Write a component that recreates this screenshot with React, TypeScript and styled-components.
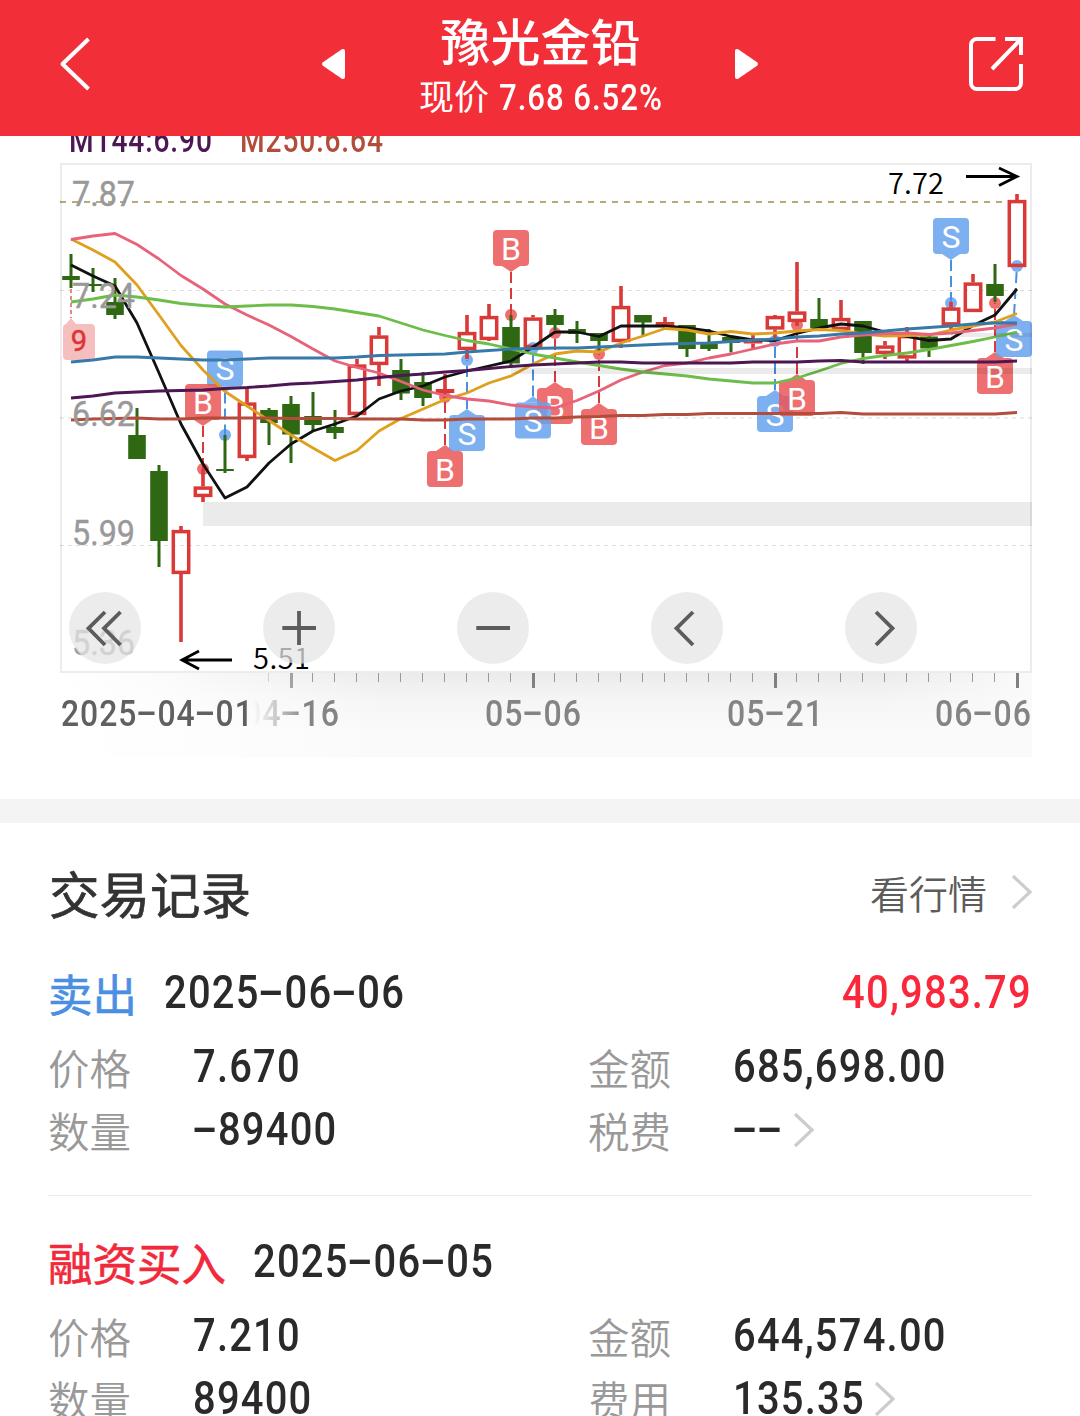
import React from "react";
import styled, { createGlobalStyle } from "styled-components";

const CJK = `"Noto Sans CJK SC", sans-serif`;
const DIGITS = `Roboto, "Noto Sans CJK SC", sans-serif`;
const RED = "#d93a38";
const GREEN = "#2f6813";

const GlobalStyle = createGlobalStyle`
  * { box-sizing: border-box; }
  body { margin: 0; background: #fff; }
`;

const Page = styled.div`
  width: 1080px;
  height: 1416px;
  overflow: hidden;
  background: #fff;
  font-family: ${CJK};
`;

/* ---------- condensed numerals ---------- */

const NumBox = styled.span<{ $size: number; $width: number; $weight: number; $color: string; $right?: boolean }>`
  display: inline-flex;
  flex: none;
  justify-content: ${(p) => (p.$right ? "flex-end" : "flex-start")};
  width: ${(p) => p.$width}px;
  font-family: ${DIGITS};
  font-size: ${(p) => p.$size}px;
  line-height: 1.2;
  font-weight: ${(p) => p.$weight};
  color: ${(p) => p.$color};
  white-space: pre;
`;

const NumText = styled.span<{ $right?: boolean; $squeeze: number }>`
  flex: none;
  transform: scaleX(${(p) => p.$squeeze});
  transform-origin: ${(p) => (p.$right ? "right" : "left")} center;
  letter-spacing: 0.031em;
`;

const Dash = styled.span`
  display: inline-block;
  width: 0.625em;
  letter-spacing: 0;
  text-align: center;
  transform: translate(-0.02em, -0.03em) scaleX(1.95);
`;

type NumProps = {
  text: string;
  size: number;
  width: number;
  weight?: number;
  color: string;
  right?: boolean;
  squeeze?: number;
};

function Num({ text, size, width, weight = 500, color, right, squeeze = 0.867 }: NumProps) {
  return (
    <NumBox $size={size} $width={width} $weight={weight} $color={color} $right={right}>
      <NumText $right={right} $squeeze={squeeze}>
        {text.split(/(-)/).map((part, i) => (part === "-" ? <Dash key={i}>-</Dash> : part))}
      </NumText>
    </NumBox>
  );
}

/* ---------- header ---------- */

const Header = styled.header`
  display: grid;
  grid-template-columns: 100px 440px 100px;
  align-items: center;
  justify-content: space-between;
  height: 136px;
  padding: 0 58px 8px 57px;
  background: #f22f38;
  color: #fff;
`;

const Stepper = styled.div`
  display: flex;
  align-items: center;
  justify-content: space-between;
`;

const Heading = styled.div`
  display: flex;
  flex-direction: column;
  align-items: center;
  padding-left: 2px;
`;

const StockName = styled.h1`
  margin: 0;
  font-size: 50px;
  line-height: 60px;
  font-weight: 500;
`;

const Quote = styled.div`
  display: flex;
  align-items: center;
  gap: 10px;
  height: 50px;
  padding-top: 10px;
`;

const QuoteLabel = styled.span`
  font-size: 35px;
  line-height: 40px;
  padding-bottom: 8px;
`;

const ShareSlot = styled.div`
  display: flex;
  justify-content: flex-end;
  margin-right: -1px;
`;

/* ---------- chart ---------- */

const Legend = styled.div`
  display: flex;
  align-items: flex-end;
  gap: 25px;
  height: 27px;
  padding: 0 0 1px 69px;
  overflow: hidden;
`;

const ChartPanel = styled.section`
  position: relative;
  width: 972px;
  margin: 0 48px 42px 60px;
`;

const Plot = styled.svg`
  display: block;
  width: 972px;
  height: 510px;
  overflow: visible;
`;

const Controls = styled.div`
  position: absolute;
  left: 9px;
  top: 429px;
  display: flex;
  gap: 122px;
`;

const RoundButton = styled.button`
  width: 72px;
  height: 72px;
  padding: 0;
  border: 0;
  border-radius: 50%;
  background: rgba(230, 230, 230, 0.74);
`;

const Axis = styled.div`
  height: 84px;
  background:
    linear-gradient(90deg, #fff 0, rgba(255, 255, 255, 0.8) 100px, rgba(255, 255, 255, 0) 330px),
    linear-gradient(270deg, #fafafa 0, rgba(250, 250, 250, 0) 150px),
    linear-gradient(180deg, #ebebeb 0, #f5f5f5 26px, #fafafa 58px);
`;

const Ticks = styled.svg`
  display: block;
  width: 972px;
  height: 16px;
`;

const DateRow = styled.div`
  display: flex;
  align-items: center;
  height: 52px;
`;

const DateSlot = styled.span<{ $gap: number; $fade?: boolean }>`
  flex: none;
  display: flex;
  margin-left: ${(p) => p.$gap}px;
  ${(p) => p.$fade && "mask-image: linear-gradient(90deg, transparent 10px, rgba(0,0,0,.3) 28px, #000 62px);"}
`;

/* ---------- records ---------- */

const Strip = styled.div`
  height: 24px;
  background: #f4f4f4;
`;

const SectionHead = styled.div`
  display: flex;
  align-items: center;
  justify-content: space-between;
  height: 104px;
  padding: 34px 47px 0 49px;
`;

const SectionTitle = styled.h2`
  margin: 0;
  font-size: 50.5px;
  line-height: 60px;
  font-weight: 400;
  -webkit-text-stroke: 0.7px #333;
  color: #333;
`;

const QuoteLink = styled.a`
  display: flex;
  align-items: center;
  gap: 24px;
  font-size: 39px;
  line-height: 50px;
  font-weight: 350;
  color: #5c5c5c;
`;

const Record = styled.article`
  height: 269px;
  margin: 0 48px;
  padding-top: 36px;
  border-bottom: 1px solid #e9e9e9;
`;

const RecordHead = styled.div`
  display: flex;
  align-items: center;
  height: 60px;
  margin-bottom: 12px;
`;

const Side = styled.span<{ $color: string }>`
  margin-right: 26.5px;
  font-size: 44.5px;
  line-height: 60px;
  font-weight: 400;
  color: ${(p) => p.$color};
  -webkit-text-stroke: 0.6px ${(p) => p.$color};
`;

const Profit = styled.span`
  display: flex;
  margin-left: auto;
`;

const Fields = styled.dl`
  display: grid;
  grid-template-columns: 145px 395px 145px 1fr;
  grid-auto-rows: 63px;
  align-items: center;
  margin: 0;
`;

const Label = styled.dt`
  font-size: 41.5px;
  line-height: 60px;
  font-weight: 350;
  color: #999;
  padding-top: 1px;
`;

const Value = styled.dd`
  display: flex;
  align-items: center;
  margin: 0;
`;

/* ---------- chart data ---------- */

const x = (i: number) => 71 + 22 * i;

// [high, bodyTop, bodyBottom, low, rising]
const candles: [number, number, number, number, 0 | 1][] = [
  [254, 276, 280, 288, 0], [268, 284, 286, 292, 0], [278, 302, 315, 319, 0], [408, 435, 459, 459, 0],
  [465, 471, 541, 567, 0], [526, 530, 574, 642, 1], [469, 486.5, 497, 502, 1], [435, 469, 471, 473, 0],
  [387, 402.5, 458, 461, 1], [408, 410, 423, 445, 0], [396, 404, 434.5, 463, 0], [392, 416, 425, 431, 0],
  [410, 427, 433, 439, 0], [359, 364.5, 415, 415, 1], [327, 335.5, 365, 386, 1], [359, 370, 393.5, 400, 0],
  [372, 382, 398, 406, 0], [374, 389, 393, 400, 1], [315, 332, 350, 359, 1], [304, 316, 340, 341, 1],
  [315, 327, 363.5, 366, 0], [315, 317.5, 348, 348, 1], [309, 315, 325, 330, 0], [321, 329, 334, 343, 0],
  [333, 333, 341, 352, 0], [286, 306, 342, 348, 1], [315, 315, 322.5, 335, 0], [317, 322, 326, 328, 1],
  [325, 325, 349, 357, 0], [329, 344, 349, 351, 0], [337, 337, 343, 352.5, 0], [335, 341.5, 343.5, 348, 1],
  [315, 316, 329.5, 338, 1], [262, 311.5, 322, 326, 1], [298, 319, 328, 328, 0], [300, 318, 330, 330, 1],
  [321, 321, 353, 364, 0], [341, 345.5, 354, 359, 1], [327, 335, 358.5, 361, 1], [336, 336.5, 348.5, 357, 0],
  [302, 307.5, 325.5, 331, 1], [274, 282.5, 312, 312, 1], [264, 284, 296, 302, 0], [194, 200, 267, 267, 1],
];

const averages: { color: string; ys: number[] }[] = [
  { color: "#111", ys: [265, 276, 286, 323, 373, 424, 464, 498, 487, 463, 444, 431, 424, 416, 399, 391, 386, 377, 371, 366, 361, 347, 332, 332, 336.5, 326, 326, 326, 328, 331, 336.5, 340, 340.5, 333.5, 328, 324, 326, 332, 336.5, 340.5, 339, 325.5, 315, 289] },
  { color: "#dfa01e", ys: [239, 250, 262, 285, 315, 345.5, 370, 391.5, 406, 420.5, 435, 448, 460.5, 450.5, 431, 418.5, 409, 399.5, 393, 383, 376, 364, 354, 351, 352, 343, 336, 328.5, 330, 334, 331.5, 334, 333, 331, 329.5, 330.5, 334, 336, 335.5, 335, 330, 326, 322, 313.5] },
  { color: "#e8637a", ys: [239.5, 236, 233.5, 244.5, 259, 275.5, 289, 304, 315, 325, 336.5, 349, 361, 367.5, 373, 381.5, 390, 395.5, 399, 401, 405, 407, 408, 400.5, 391, 380, 372, 365.5, 363, 358, 354, 349, 344, 341, 341, 337, 335, 333.5, 333, 334.5, 333, 330.5, 328, 324] },
  { color: "#6cbd49", ys: [302, 299, 295, 297, 300, 303.5, 305.5, 307, 306, 305, 305, 306.5, 309, 312.5, 316, 323, 330, 335.5, 340.5, 344, 349, 354, 358, 362, 365.5, 369, 372, 374, 376, 379, 381, 383, 383, 378, 371, 363.5, 358.5, 355.5, 353, 349.5, 345.5, 341.5, 337, 332] },
  { color: "#3779a8", ys: [362, 360, 357, 357, 358, 359, 360, 360, 359, 358, 358, 358, 358, 357, 355.5, 355, 354.5, 354, 352, 350.5, 349, 348.5, 348, 348, 347, 346, 345, 344, 343.5, 343, 341.5, 340, 339, 337, 336, 334, 333, 331, 329, 327.5, 326, 324, 323, 323] },
  { color: "#4c1753", ys: [398, 396, 393, 392, 391, 390.5, 390, 388.5, 387.5, 386, 384, 383, 381.5, 380, 377.5, 375.5, 374, 372, 370.5, 368.5, 366.5, 365, 364, 363, 362, 362, 363, 363, 363, 363, 363, 362, 362, 362, 361, 360.5, 362, 362, 362, 362, 362, 362, 362, 361] },
  { color: "#b24d3b", ys: [420, 419, 418.5, 418, 419, 419, 418, 418, 418, 418, 418.5, 418.5, 418.5, 419, 419, 419, 420, 420, 419, 419, 419, 418, 418, 417, 416.5, 415.5, 415.5, 414.5, 414.5, 413.5, 413.5, 413.5, 413.5, 413.5, 413.5, 412.5, 414, 414, 414, 414, 414, 414, 414, 412.5] },
];

type Trade = { i: number; side: "B" | "S"; top: number; dot: number; shift?: number };
const trades: Trade[] = [
  { i: 7, side: "S", top: 350.5, dot: 435 },
  { i: 6, side: "B", top: 384, dot: 469 },
  { i: 17, side: "B", top: 451, dot: 397 },
  { i: 18, side: "S", top: 415, dot: 360 },
  { i: 20, side: "B", top: 230, dot: 315 },
  { i: 22, side: "B", top: 388, dot: 333 },
  { i: 21, side: "S", top: 402.5, dot: 348 },
  { i: 24, side: "B", top: 409, dot: 354 },
  { i: 32, side: "S", top: 396, dot: 341 },
  { i: 33, side: "B", top: 380, dot: 325 },
  { i: 40, side: "S", top: 218, dot: 303 },
  { i: 42, side: "B", top: 358, dot: 303 },
  { i: 43, side: "S", top: 321, dot: 266, shift: -3 },
];

const priceMarks: [string, number][] = [["7.87", 206], ["7.24", 308], ["6.62", 425.5], ["5.99", 545], ["5.36", 655]];

function TradeMark({ i, side, top, dot, shift = 0 }: Trade) {
  const cx = x(i);
  const bx = cx + shift;
  const above = top < dot;
  const edge = above ? top + 36 : top;
  const tip = above ? edge + 6 : edge - 6;
  const fill = side === "B" ? "#eb5656" : "#66a2ed";
  const line = side === "B" ? "#d8393a" : "#4a8fe0";
  return (
    <g>
      <circle cx={cx} cy={dot} r="6" fill={fill} fillOpacity="0.85" />
      <line x1={bx} y1={tip} x2={cx} y2={dot} stroke={line} strokeWidth="2" strokeDasharray="11 5" />
      <g fill={fill} fillOpacity="0.85">
        <rect x={bx - 18} y={top} width="36" height="36" rx="4" />
        <path d={`M${bx - 9} ${edge}L${bx} ${tip}L${bx + 9} ${edge}Z`} />
      </g>
      <text x={bx} y={top + 29.5} textAnchor="middle" fontFamily={DIGITS} fontSize="32" fill="#fff">{side}</text>
    </g>
  );
}

function Candle({ i }: { i: number }) {
  const [hi, top, bottom, lo, rising] = candles[i];
  const cx = x(i);
  if (!rising) {
    return (
      <g fill={GREEN}>
        <rect x={cx - 1.5} y={hi} width="3" height={lo - hi} />
        <rect x={cx - 8.8} y={top} width="17.6" height={bottom - top} />
      </g>
    );
  }
  const flat = bottom - top < 6;
  return (
    <g fill={RED}>
      <rect x={cx - 1.8} y={hi} width="3.6" height={Math.max(0, top - hi)} />
      <rect x={cx - 1.8} y={bottom} width="3.6" height={Math.max(0, lo - bottom)} />
      {flat ? (
        <rect x={cx - 9.3} y={top} width="18.6" height={bottom - top} />
      ) : (
        <rect x={cx - 7.7} y={top + 1.6} width="15.4" height={bottom - top - 3.2} fill="none" stroke={RED} strokeWidth="3.5" />
      )}
    </g>
  );
}

function KLine() {
  return (
    <Plot viewBox="60 163 972 510">
      <g stroke="#dcdcdc" strokeWidth="1.2" strokeDasharray="4 4">
        <path d="M60 290.5H1032M60 418H1032M60 545.5H1032" />
      </g>
      <path d="M60 202H1003" stroke="#b9a878" strokeWidth="2" strokeDasharray="6 6" />
      <path d="M71 289V318" stroke="#ea8585" strokeWidth="2" strokeDasharray="4 3" />
      <path d="M68 324H91a4 4 0 0 1 4 4V356a4 4 0 0 1-4 4H67a4 4 0 0 1-4-4V328a4 4 0 0 1 3-4L71 318L76 324Z" fill="#f6bfbf" />
      <text x="79" y="351" textAnchor="middle" fontFamily={DIGITS} fontSize="29" fill="#dd3535" stroke="#dd3535" strokeWidth="0.5">9</text>
      {trades.map((t) => <TradeMark key={t.i} {...t} />)}
      {candles.map((_, i) => <Candle key={i} i={i} />)}
      {averages.map((a) => (
        <polyline key={a.color} points={a.ys.map((y, i) => `${x(i)},${y}`).join(" ")} fill="none" stroke={a.color} strokeWidth="2.8" strokeLinejoin="round" />
      ))}
      <g fill="#000" fillOpacity="0.08">
        <rect x="203" y="502" width="829" height="24" />
        <rect x="511" y="368" width="521" height="6" />
        <rect x="951" y="333" width="81" height="4" />
      </g>
      <rect x="61" y="164" width="970" height="508" fill="none" stroke="#000" strokeOpacity="0.075" strokeWidth="2" />
      <g fill="#999" stroke="#999" strokeWidth="0.4" fontFamily={DIGITS} fontSize="35.5">
        {priceMarks.map(([label, y]) => (
          <text key={label} x="72" y={y} textLength="63" lengthAdjust="spacingAndGlyphs">{label}</text>
        ))}
      </g>
      <g fontFamily={CJK} fontSize="29" fontWeight="350" fill="#000">
        <text x="888" y="194" textLength="56">7.72</text>
        <text x="253" y="669" textLength="57">5.51</text>
      </g>
      <g fill="none" stroke="#000" strokeWidth="2.8">
        <path d="M966 176.500H1017M999 168L1017 176.500L999 185.500" />
        <path d="M232 660H182M199 651L182 660L199 669" />
      </g>
    </Plot>
  );
}

const controlPaths = [
  "M36 20L19.500 36.300L36 53M51.500 20L35 36.300L51.500 53",
  "M19.300 36H53M36 19V53",
  "M19.300 36H53",
  "M42 20L25.500 36.300L42 53",
  "M31 20L47.500 36.300L31 53",
];
const controlNames = ["最早", "放大", "缩小", "左移", "右移"];

function Chevron() {
  return (
    <svg width="22" height="38" viewBox="0 0 22 38" fill="none" stroke="#ccc" strokeWidth="3.2">
      <path d="M2 3L19 19L2 35" />
    </svg>
  );
}

type Entry = {
  side: string;
  color: string;
  date: string;
  profit?: string;
  fields: { label: string; value: string; width: number; more?: boolean }[];
};

const entries: Entry[] = [
  {
    side: "卖出", color: "#4a90e2", date: "2025-06-06", profit: "40,983.79",
    fields: [
      { label: "价格", value: "7.670", width: 106 },
      { label: "金额", value: "685,698.00", width: 212 },
      { label: "数量", value: "-89400", width: 144 },
      { label: "税费", value: "--", width: 60, more: true },
    ],
  },
  {
    side: "融资买入", color: "#f2293b", date: "2025-06-05",
    fields: [
      { label: "价格", value: "7.210", width: 106 },
      { label: "金额", value: "644,574.00", width: 212 },
      { label: "数量", value: "89400", width: 120 },
      { label: "费用", value: "135.35", width: 141, more: true },
    ],
  },
];

export default function App() {
  return (
    <Page>
      <GlobalStyle />
      <Header>
        <svg width="38" height="60" viewBox="-1 0 38 60" fill="none" stroke="#fff" strokeWidth="4">
          <path d="M30.500 5L4.500 30L30.500 55" strokeLinejoin="round" />
        </svg>
        <Stepper>
          <svg width="26" height="32" viewBox="0 0 26 32" fill="#fff" stroke="#fff" strokeWidth="4" strokeLinejoin="round">
            <path d="M23 3V29L4 16Z" />
          </svg>
          <Heading>
            <StockName>豫光金铅</StockName>
            <Quote>
              <QuoteLabel>现价</QuoteLabel>
              <Num text="7.68 6.52%" size={36} width={163} color="#fff" squeeze={0.865} />
            </Quote>
          </Heading>
          <svg width="26" height="32" viewBox="-1 0 26 32" fill="#fff" stroke="#fff" strokeWidth="4" strokeLinejoin="round">
            <path d="M3 3V29L22 16Z" />
          </svg>
        </Stepper>
        <ShareSlot>
          <svg width="54" height="54" viewBox="0 0 54 54" fill="none" stroke="#fff" strokeWidth="4">
            <path d="M26.500 2H8a6 6 0 0 0-6 6V46a6 6 0 0 0 6 6H46a6 6 0 0 0 6-6V27" />
            <path d="M36 2H52V18M51 3L23 32" />
          </svg>
        </ShareSlot>
      </Header>

      <Legend>
        <Num text="M144:6.90" size={35} width={146} color="#4c1753" squeeze={0.805} />
        <Num text="M250:6.64" size={35} width={146} color="#b24d3b" squeeze={0.805} />
      </Legend>

      <ChartPanel>
        <KLine />
        <Axis>
          <Ticks viewBox="60 673 972 16">
            {Array.from({ length: 35 }, (_, k) => k + 9).map((i) => {
              const major = (i - 10) % 11 === 0;
              return (
                <rect
                  key={i}
                  x={x(i) - (major ? 1.5 : 1)}
                  y="673"
                  width={major ? 3 : 1}
                  height={major ? 15 : 9}
                  fill={major ? "#808080" : "#999"}
                  opacity={i === 9 ? 0.4 : i === 10 ? 0.7 : 1}
                  shapeRendering="crispEdges"
                />
              );
            })}
          </Ticks>
          <DateRow>
            <DateSlot $gap={1}><Num text="2025-04-01" size={36} width={191} color="#606060" squeeze={0.886} /></DateSlot>
            <DateSlot $gap={-9} $fade><Num text="04-16" size={36} width={97} color="#848484" squeeze={0.89} /></DateSlot>
            <DateSlot $gap={145}><Num text="05-06" size={36} width={97} color="#848484" squeeze={0.89} /></DateSlot>
            <DateSlot $gap={145}><Num text="05-21" size={36} width={97} color="#848484" squeeze={0.89} /></DateSlot>
            <DateSlot $gap={111}><Num text="06-06" size={36} width={97} color="#848484" squeeze={0.89} /></DateSlot>
          </DateRow>
        </Axis>
        <Controls>
          {controlPaths.map((d, k) => (
            <RoundButton key={k} aria-label={controlNames[k]}>
              <svg width="72" height="72" viewBox="0 0 72 72" fill="none" stroke="#5c5c5c" strokeWidth="3.8">
                <path d={d} />
              </svg>
            </RoundButton>
          ))}
        </Controls>
      </ChartPanel>

      <Strip />

      <SectionHead>
        <SectionTitle>交易记录</SectionTitle>
        <QuoteLink>
          看行情
          <Chevron />
        </QuoteLink>
      </SectionHead>

      {entries.map((e) => (
        <Record key={e.date}>
          <RecordHead>
            <Side $color={e.color}>{e.side}</Side>
            <Num text={e.date} size={46} width={240} color="#2a2a2a" />
            {e.profit && (
              <Profit>
                <Num text={e.profit} size={46} width={190} color="#f9293b" right />
              </Profit>
            )}
          </RecordHead>
          <Fields>
            {e.fields.map((f) => (
              <React.Fragment key={f.label}>
                <Label>{f.label}</Label>
                <Value>
                  <Num text={f.value} size={46} width={f.width} color="#2a2a2a" />
                  {f.more && <Chevron />}
                </Value>
              </React.Fragment>
            ))}
          </Fields>
        </Record>
      ))}
    </Page>
  );
}
